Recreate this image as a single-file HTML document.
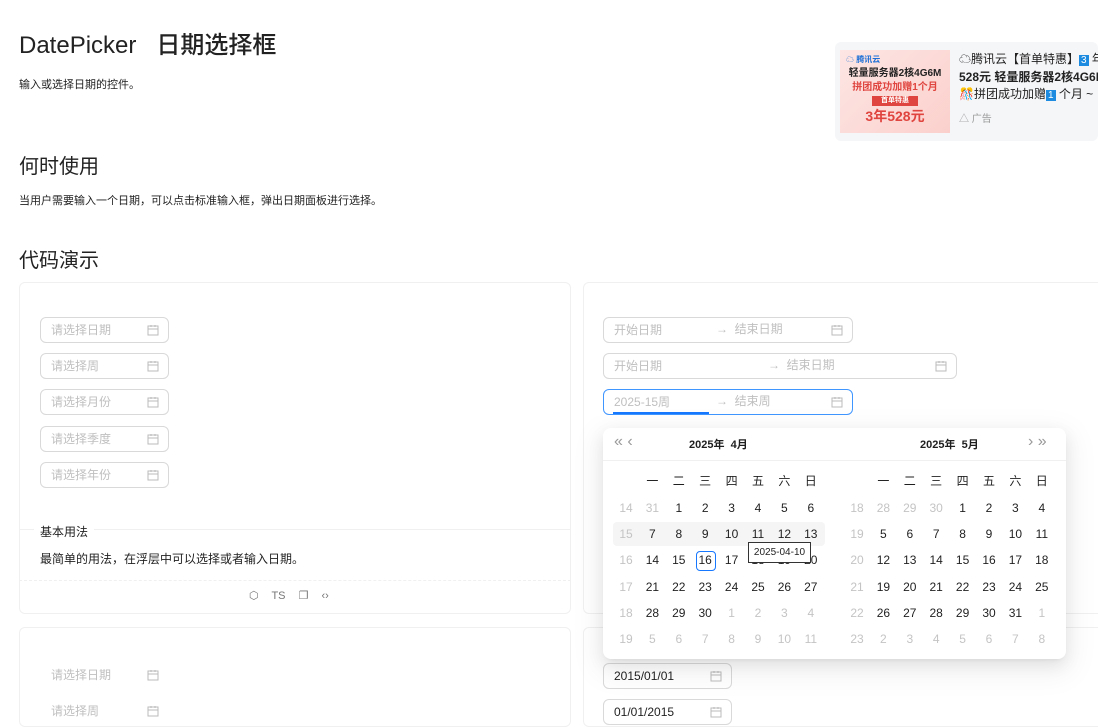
<!DOCTYPE html>
<html><head><meta charset="utf-8"><style>
*{box-sizing:border-box;margin:0;padding:0}
body{width:1098px;height:715px;overflow:hidden;background:#fff;font-family:"Liberation Sans","Noto Sans CJK SC",sans-serif;color:rgba(0,0,0,.88);position:relative}
.a{position:absolute}
.card{position:absolute;border:1px solid #f0f0f0;border-radius:6px}
.inp{position:absolute;height:26px;border:1px solid #d9d9d9;border-radius:6px;font-size:12px;color:#bfbfbf;padding:0 10px;line-height:24px;background:#fff}
.ic{position:absolute;right:9px;top:6px;width:12px;height:12px}
.pop{position:absolute;left:603px;top:428px;width:463px;height:231px;background:#fff;border-radius:8px;box-shadow:0 6px 16px rgba(0,0,0,.08),0 3px 6px -4px rgba(0,0,0,.12),0 9px 28px 8px rgba(0,0,0,.05)}
.c{position:absolute;width:24px;text-align:center;font-size:12px;line-height:20px}
.g{color:#c4c4c4}
</style></head><body>
<div class="a" style="left:19px;top:25px;font-size:24px;font-weight:500;color:#222">DatePicker&nbsp;&nbsp;&nbsp;日期选择框</div>
<div class="a" style="left:19px;top:76px;font-size:11px">输入或选择日期的控件。</div>
<div class="a" style="left:19px;top:150px;font-size:20px;color:#222">何时使用</div>
<div class="a" style="left:19px;top:192px;font-size:11px">当用户需要输入一个日期，可以点击标准输入框，弹出日期面板进行选择。</div>
<div class="a" style="left:19px;top:244px;font-size:20px;color:#222">代码演示</div>

<div class="a" style="left:835px;top:42px;width:263px;height:99px;background:#f5f6f8;border-radius:6px"></div>
<div class="a" style="left:840px;top:50px;width:110px;height:83px;background:linear-gradient(135deg,#fde6e4,#fbd0cc);text-align:center;font-size:10px;font-weight:bold;color:#222;line-height:14px;padding-top:3px">
<div style="text-align:left;padding-left:6px;font-size:8px;color:#1c6fd6">☁ 腾讯云</div>
<div>轻量服务器2核4G6M</div><div style="color:#e0443e">拼团成功加赠1个月</div>
<div style="margin:1px auto;width:46px;background:#e0443e;color:#fff;font-size:7px;line-height:10px">首单特惠</div>
<div style="color:#e0443e;font-size:14px;line-height:18px">3年528元</div></div>
<div class="a" style="left:959px;top:51px;font-size:12px;line-height:17px;white-space:nowrap;color:#222">☁腾讯云【首单特惠】<span style="background:#1c8be0;color:#fff;font-size:10px;padding:0 2px">3</span> 年<br><b>528元 轻量服务器2核4G6M</b><br>🎊拼团成功加赠<span style="background:#1c8be0;color:#fff;font-size:10px;padding:0 2px">1</span> 个月 ~</div>
<div class="a" style="left:959px;top:110px;font-size:10px;color:#999">△ 广告</div>

<div class="card" style="left:19px;top:282px;width:552px;height:332px"></div>
<div class="card" style="left:583px;top:282px;width:530px;height:332px"></div>
<div class="a" style="left:19px;top:529px;width:552px;border-top:1px solid #f0f0f0"></div>
<div class="a" style="left:34px;top:523px;background:#fff;padding:0 6px;font-size:12px;color:#222">基本用法</div>
<div class="a" style="left:40px;top:550px;font-size:12px">最简单的用法，在浮层中可以选择或者输入日期。</div>
<div class="a" style="left:19px;top:580px;width:552px;border-top:1px dashed #f0f0f0"></div>
<div class="a" style="left:249px;top:589px;font-size:11px;color:#777;word-spacing:10px">⬡ TS ❐ ‹›</div>
<div class="card" style="left:19px;top:627px;width:552px;height:100px"></div>
<div class="card" style="left:583px;top:627px;width:530px;height:100px"></div>

<div class="inp" style="left:40px;top:317px;width:129px">请选择日期<svg class="ic" viewBox="0 0 12 12"><rect x="1" y="2" width="10" height="9" fill="none" stroke="#bbb"/><path d="M1 5h10M4 1v2M8 1v2" stroke="#bbb"/></svg></div>
<div class="inp" style="left:40px;top:353px;width:129px">请选择周<svg class="ic" viewBox="0 0 12 12"><rect x="1" y="2" width="10" height="9" fill="none" stroke="#bbb"/><path d="M1 5h10M4 1v2M8 1v2" stroke="#bbb"/></svg></div>
<div class="inp" style="left:40px;top:389px;width:129px">请选择月份<svg class="ic" viewBox="0 0 12 12"><rect x="1" y="2" width="10" height="9" fill="none" stroke="#bbb"/><path d="M1 5h10M4 1v2M8 1v2" stroke="#bbb"/></svg></div>
<div class="inp" style="left:40px;top:426px;width:129px">请选择季度<svg class="ic" viewBox="0 0 12 12"><rect x="1" y="2" width="10" height="9" fill="none" stroke="#bbb"/><path d="M1 5h10M4 1v2M8 1v2" stroke="#bbb"/></svg></div>
<div class="inp" style="left:40px;top:462px;width:129px">请选择年份<svg class="ic" viewBox="0 0 12 12"><rect x="1" y="2" width="10" height="9" fill="none" stroke="#bbb"/><path d="M1 5h10M4 1v2M8 1v2" stroke="#bbb"/></svg></div>
<div class="inp" style="left:40px;top:662px;width:129px;border-color:transparent">请选择日期<svg class="ic" viewBox="0 0 12 12"><rect x="1" y="2" width="10" height="9" fill="none" stroke="#bbb"/><path d="M1 5h10M4 1v2M8 1v2" stroke="#bbb"/></svg></div>
<div class="inp" style="left:40px;top:698px;width:129px;border-color:transparent">请选择周<svg class="ic" viewBox="0 0 12 12"><rect x="1" y="2" width="10" height="9" fill="none" stroke="#bbb"/><path d="M1 5h10M4 1v2M8 1v2" stroke="#bbb"/></svg></div>

<div class="inp" style="left:603px;top:317px;width:250px">开始日期<span class="a" style="left:112px;top:-1px">→&nbsp;&nbsp;结束日期</span><svg class="ic" viewBox="0 0 12 12"><rect x="1" y="2" width="10" height="9" fill="none" stroke="#bbb"/><path d="M1 5h10M4 1v2M8 1v2" stroke="#bbb"/></svg></div>
<div class="inp" style="left:603px;top:353px;width:354px">开始日期<span class="a" style="left:164px;top:-1px">→&nbsp;&nbsp;结束日期</span><svg class="ic" viewBox="0 0 12 12"><rect x="1" y="2" width="10" height="9" fill="none" stroke="#bbb"/><path d="M1 5h10M4 1v2M8 1v2" stroke="#bbb"/></svg></div>
<div class="inp" style="left:603px;top:389px;width:250px;border-color:#4096ff">2025-15周<span class="a" style="left:112px;top:-1px">→&nbsp;&nbsp;结束周</span><svg class="ic" viewBox="0 0 12 12"><rect x="1" y="2" width="10" height="9" fill="none" stroke="#bbb"/><path d="M1 5h10M4 1v2M8 1v2" stroke="#bbb"/></svg><div class="a" style="left:9px;top:22px;width:96px;height:2px;background:#1677ff"></div></div>
<div class="inp" style="left:603px;top:663px;width:129px;color:#222">2015/01/01<svg class="ic" viewBox="0 0 12 12"><rect x="1" y="2" width="10" height="9" fill="none" stroke="#bbb"/><path d="M1 5h10M4 1v2M8 1v2" stroke="#bbb"/></svg></div>
<div class="inp" style="left:603px;top:699px;width:129px;color:#222">01/01/2015<svg class="ic" viewBox="0 0 12 12"><rect x="1" y="2" width="10" height="9" fill="none" stroke="#bbb"/><path d="M1 5h10M4 1v2M8 1v2" stroke="#bbb"/></svg></div>

<div class="pop">
<div class="a" style="left:0;top:32px;width:463px;border-top:1px solid #f0f0f0"></div>
<div class="a" style="left:11px;top:5px;font-size:16px;color:#999">«&nbsp;‹</div>
<div class="a" style="left:425px;top:5px;font-size:16px;color:#999">›&nbsp;»</div>
<div class="a" style="left:86px;top:8px;font-size:11px;font-weight:bold">2025年&nbsp;&nbsp;4月</div>
<div class="a" style="left:317px;top:8px;font-size:11px;font-weight:bold">2025年&nbsp;&nbsp;5月</div>
<div class="a" style="left:10px;top:94px;width:212px;height:24px;background:#f5f5f5;border-radius:4px"></div>
<div class="a" style="left:93px;top:123px;width:20px;height:20px;border:1px solid #1677ff;border-radius:4px"></div>
<div id="cal"></div>
<div class="a" style="left:145px;top:114px;width:63px;height:21px;border:1px solid #333;background:#fff;font-size:10px;line-height:19px;text-align:center">2025-04-10</div>
</div>
<script>
var wd=['一','二','三','四','五','六','日'];
var L=[[14,31,1,2,3,4,5,6],[15,7,8,9,10,11,12,13],[16,14,15,16,17,18,19,20],[17,21,22,23,24,25,26,27],[18,28,29,30,1,2,3,4],[19,5,6,7,8,9,10,11]];
var R=[[18,28,29,30,1,2,3,4],[19,5,6,7,8,9,10,11],[20,12,13,14,15,16,17,18],[21,19,20,21,22,23,24,25],[22,26,27,28,29,30,31,1],[23,2,3,4,5,6,7,8]];
var h='';var ys=[70,96,122,149,175,201];
function panel(d,x0){
 for(var i=0;i<7;i++)h+='<div class="c" style="left:'+(x0+26.4*(i+1)-12)+'px;top:43px">'+wd[i]+'</div>';
 for(var r=0;r<6;r++)for(var c=0;c<8;c++){var v=d[r][c];var g=c==0||(r==0&&v>20)||(r>=4&&v<15);
 h+='<div class="c'+(g?' g':'')+'" style="left:'+(x0+26.4*c-12)+'px;top:'+ys[r]+'px">'+v+'</div>';}
}
panel(L,23);panel(R,254);
document.getElementById('cal').innerHTML=h;
</script>
</body></html>
